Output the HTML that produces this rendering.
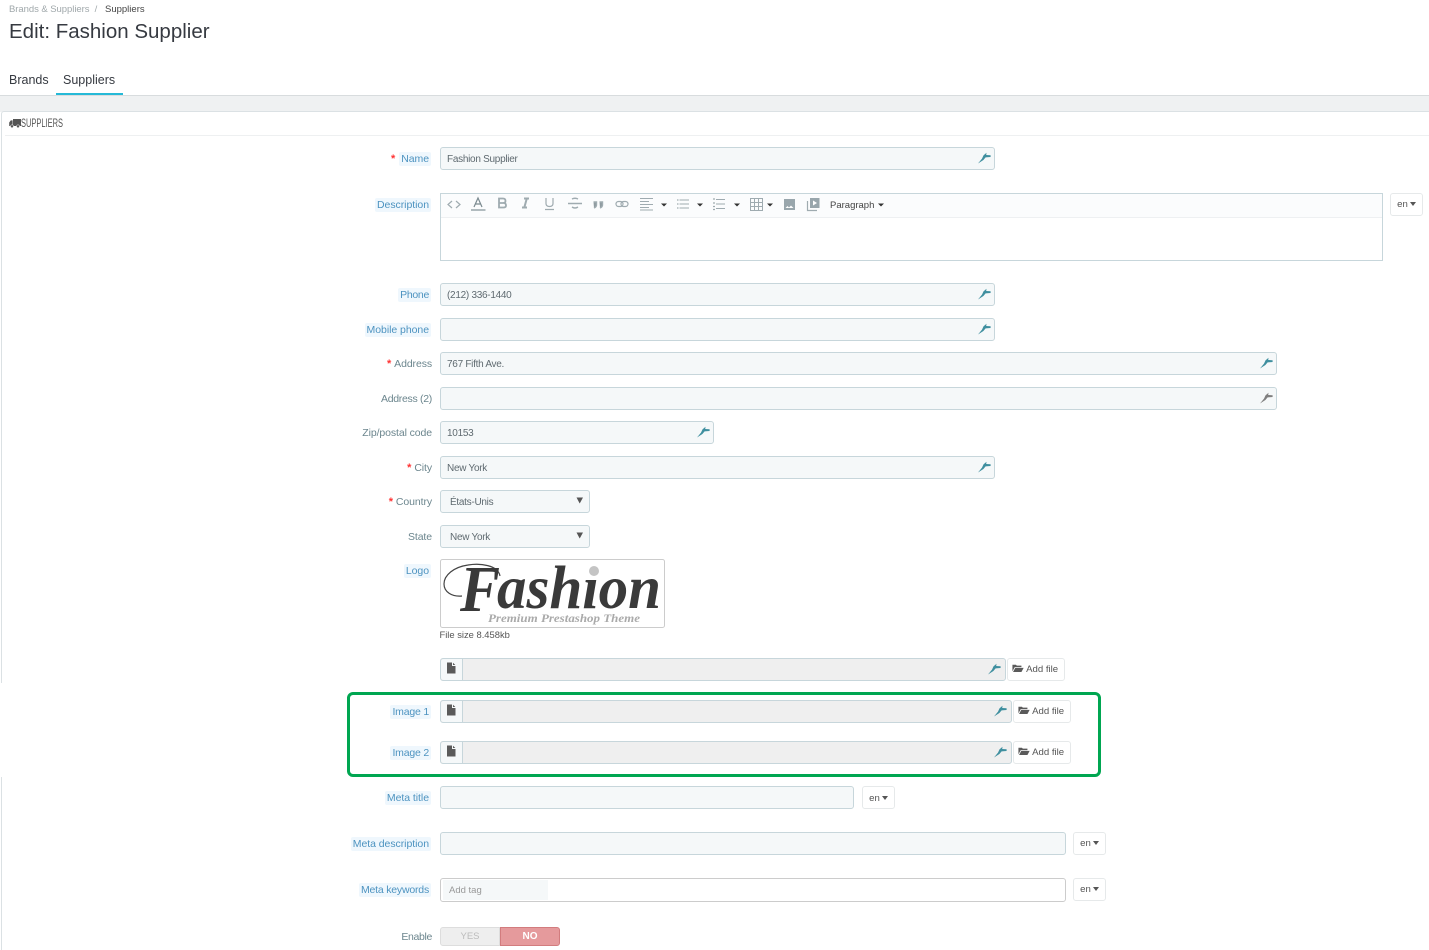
<!DOCTYPE html>
<html><head><meta charset="utf-8"><style>
html,body{margin:0;padding:0;width:1429px;height:950px;overflow:hidden;background:#fff}
body{font-family:"Liberation Sans",sans-serif;font-size:10.5px;color:#555;position:relative}
.a,.t,.i,.l,.b{position:absolute;box-sizing:border-box}
.t{white-space:nowrap;line-height:14px}
.i{height:23px;background:#f5f8f9;border:1px solid #c7d6db;border-radius:3px;padding:0 6px;line-height:23px;color:#5f6a70;white-space:nowrap;font-size:10px;letter-spacing:-.28px}
.i svg.w{position:absolute;right:3px;top:4px}
.l{right:997px;height:14px;line-height:14px;text-align:right;white-space:nowrap;color:#6c868e;letter-spacing:-.1px}
.h{right:998px;background:#eff7fd;color:#4d93c0;padding:0 2px;height:14px;border-radius:2px;letter-spacing:-.05px}
.r{color:#f33;font-size:12px;margin-right:3px;font-weight:bold}
.b{background:#fff;border:1px solid #e6e9ea;border-radius:3px;text-align:center;color:#555;height:23px;line-height:21px;white-space:nowrap;font-size:9.6px}
.c{display:inline-block;width:0;height:0;border:3px solid transparent;border-top:4px solid #555;border-bottom:0;vertical-align:1px;margin-left:2px}
.f{background:#efefef;padding:0}
.f .s{position:absolute;left:0;top:0;bottom:0;width:21px;background:#f5f8f9;border-right:1px solid #c7d6db;border-radius:3px 0 0 3px}
.add{text-align:left;padding-left:4px;width:58px}
</style></head><body>
<svg width="0" height="0" style="position:absolute"><defs>
<symbol id="w" viewBox="0 0 14 12"><path d="M1 11.5 L5 6.6 L6.5 3.400 L9.500 .8 L9.200 3 L13.600 3.200 L13.600 5 L8.600 5.400 L6.400 8 Z" fill="#3f8f9f"/></symbol>
<symbol id="d" viewBox="0 0 10 12"><path d="M1 .5H6V4H9.5V11.5H1ZM7 .7 9.3 3H7Z" fill="#5a5a5a"/></symbol>
<symbol id="o" viewBox="0 0 14 10"><path d="M.5 9V1.2H4.6L5.6 2.3H11V4H3.2L.5 9ZM1.2 9.6 3.8 4.8H13.6L11 9.6Z" fill="#5a5a5a"/></symbol>
</defs></svg>

<div class="t" style="left:9px;top:2px;font-size:9.5px;line-height:15px;color:#a0a8ab;letter-spacing:-.05px">Brands &amp; Suppliers &nbsp;/</div>
<div class="t" style="left:105px;top:2px;font-size:9.5px;line-height:15px;color:#444">Suppliers</div>
<div class="t" style="left:9px;top:20px;font-size:20.5px;line-height:24px;color:#363a41;letter-spacing:0">Edit: Fashion Supplier</div>
<div class="t" style="left:9px;top:73px;font-size:12.5px;color:#363a41">Brands</div>
<div class="t" style="left:63px;top:73px;font-size:12.5px;color:#363a41">Suppliers</div>
<div class="a" style="left:56px;top:93px;width:67px;height:2px;background:#25b9d7"></div>
<div class="a" style="left:0;top:95px;width:1429px;height:17px;background:#eff1f2;border-top:1px solid #d8dcde"></div>
<div class="a" style="left:1px;top:111px;width:1428px;height:839px;background:#fff;border:1px solid #dbe1e4;border-width:1px 0 0 1px;border-radius:3px 0 0 0"></div>
<div class="a" style="left:5px;top:135px;width:1424px;height:1px;background:#eef0f1"></div>
<svg class="a" style="left:9px;top:118px" width="12" height="10" viewBox="0 0 12 10"><path d="M4 1H12V8H4ZM.2 8V4.5L1.8 2.4H3.6V8Z" fill="#555"/><circle cx="3" cy="8.3" r="1.5" fill="#555" stroke="#fff" stroke-width=".5"/><circle cx="9" cy="8.3" r="1.5" fill="#555" stroke="#fff" stroke-width=".5"/></svg>
<div class="t" style="left:21px;top:117px;font-size:11.5px;color:#555;transform-origin:left;transform:scaleX(.65)">SUPPLIERS</div>

<div class="l h" style="top:152px">Name</div>
<div class="t r" style="left:391px;top:152px;color:#f33;font-size:11px">*</div>
<div class="i" style="left:440px;top:147px;width:555px">Fashion Supplier<svg class="w"  width="14" height="12"><use href="#w"/></svg></div>

<div class="l h" style="top:198px">Description</div>
<div class="a" style="left:440px;top:193px;width:943px;height:68px;border:1px solid #c7d6db"></div>
<div class="a" style="left:441px;top:194px;width:941px;height:24px;background:#fbfcfd;border-bottom:1px solid #eef0f2"></div>
<svg class="a" style="left:441px;top:194px" width="460" height="23" viewBox="0 0 460 23" fill="none" stroke="#9fabb0" stroke-width="1.2">
<path d="M11 7 7 10.500 11 14M15 7 19 10.500 15 14"/>
<path d="M33 13 37 4 41 13M34.500 10H39.500" stroke="#7b8a90"/><path d="M30 16H44.500" stroke-width="1.600"/>
<path d="M58 4.500H62Q64.500 4.500 64.500 7 64.500 9 62 9H58ZM58 9H62.500Q65 9 65 11.500 65 13.500 62.500 13.500H58Z" stroke-width="1.800"/>
<path d="M83 4.500H88M81 13.500H86M85.800 4.500 83.300 13.500" stroke-width="2"/>
<path d="M105 4V9.500Q105 12.500 108.500 12.500 112 12.500 112 9.500V4M104 15.500H113"/>
<path d="M127 9.500H141M137 5Q134 3.500 131 5M131 13Q134 15 137 13" stroke-width="1.400"/>
<path d="M152.500 8H155.500V11Q155.500 13 153 14M158.500 8H161.500V11Q161.500 13 159 14" stroke-width="1.400" fill="#8f9ba0"/>
<rect x="175" y="7.500" width="7" height="5" rx="2.500"/><rect x="180" y="7.500" width="7" height="5" rx="2.500"/>
<path d="M199 4.500H212M199 7.500H208M199 10.500H212M199 13.500H208M199 16H212" stroke-width="1"/>
<path d="M238.500 6H248M238.500 10H248M238.500 14H248" stroke-width="1"/><path d="M236 6H237.500M236 10H237.500M236 14H237.500" stroke-width="1.200"/>
<path d="M275 5.500H284M275 10H284M275 14.500H284" stroke-width="1"/><path d="M272 5H274M272 9H274M272 12.500H274M272 15.500H274" stroke-width="1.200"/>
<path d="M309.500 4.500H321.500V16.500H309.500ZM313.500 4.500V16.500M317.500 4.500V16.500M309.500 8.500H321.500M309.500 12.500H321.500" stroke-width="1"/>
<rect x="343" y="5" width="11" height="11" fill="#99a6ac" stroke="none"/><path d="M344.500 14 346.500 12 348 13.500 350 11.500 352.500 14Z" fill="#fff" stroke="none"/>
<path d="M366.500 7V16.500H376" stroke-width="1.200"/><rect x="369" y="4" width="9.500" height="10" fill="#99a6ac" stroke="none"/><path d="M372 6.500V11.500L376 9Z" fill="#fff" stroke="none"/>
<g fill="#333" stroke="none"><path d="M220 9.500H226L223 12.500Z"/><path d="M256 9.500H262L259 12.500Z"/><path d="M293 9.500H299L296 12.500Z"/><path d="M326 9.500H332L329 12.500Z"/><path d="M437 9.500H443L440 12.500Z"/></g>
</svg>
<div class="t" style="left:830px;top:198px;font-size:9.5px;line-height:15px;color:#444">Paragraph</div>
<div class="b" style="left:1390px;top:193px;width:33px">en<span class="c"></span></div>

<div class="l h" style="top:288px;letter-spacing:-.3px">Phone</div>
<div class="i" style="left:440px;top:283px;width:555px">(212) 336-1440<svg class="w" width="14" height="12"><use href="#w"/></svg></div>
<div class="l h" style="top:323px">Mobile phone</div>
<div class="i" style="left:440px;top:318px;width:555px"><svg class="w" width="14" height="12"><use href="#w"/></svg></div>
<div class="l" style="top:357px"><span class="r" style="font-size:11px">*</span>Address</div>
<div class="i" style="left:440px;top:352px;width:837px">767 Fifth Ave.<svg class="w" width="14" height="12"><use href="#w"/></svg></div>
<div class="l" style="top:392px;letter-spacing:-.3px">Address (2)</div>
<div class="i" style="left:440px;top:387px;width:837px"><svg class="w" width="14" height="12" style="filter:grayscale(1)"><use href="#w"/></svg></div>
<div class="l" style="top:426px">Zip/postal code</div>
<div class="i" style="left:440px;top:421px;width:274px">10153<svg class="w" width="14" height="12"><use href="#w"/></svg></div>
<div class="l" style="top:461px"><span class="r" style="font-size:11px">*</span>City</div>
<div class="i" style="left:440px;top:456px;width:555px">New York<svg class="w" width="14" height="12"><use href="#w"/></svg></div>
<div class="l" style="top:495px"><span class="r" style="font-size:11px">*</span>Country</div>
<div class="i" style="left:440px;top:490px;width:150px;padding-left:9px;line-height:24px">États-Unis<svg class="a" style="left:135px;top:6px" width="8" height="7"><path d="M.5 .5H7L3.700 6.500Z" fill="#555"/></svg></div>
<div class="l" style="top:530px">State</div>
<div class="i" style="left:440px;top:525px;width:150px;padding-left:9px">New York<svg class="a" style="left:135px;top:6px" width="8" height="7"><path d="M.5 .5H7L3.700 6.500Z" fill="#555"/></svg></div>

<div class="l h" style="top:564px">Logo</div>
<svg class="a" style="left:440px;top:559px" width="225" height="69" viewBox="0 0 225 69">
<rect x=".5" y=".5" width="224" height="68" rx="2" fill="#fff" stroke="#ccc"/>
<path d="M60 17C58 6 40 4 28 6 14 8 4 16 4 25 4 33 12 38 22 37" fill="none" stroke="#444" stroke-width="1.200"/>
<text x="20" y="52" font-family="Liberation Serif,serif" font-style="italic" font-weight="bold" font-size="66" textLength="40" lengthAdjust="spacingAndGlyphs" fill="#3a3a3a">F</text>
<text x="57" y="49" font-family="Liberation Serif,serif" font-style="italic" font-weight="bold" font-size="61" textLength="164" lengthAdjust="spacingAndGlyphs" fill="#3a3a3a">ashion</text>
<circle cx="154" cy="12" r="6.500" fill="#fff"/><circle cx="154" cy="12" r="5" fill="#c4c4c4"/>
<text x="48" y="63" font-family="Liberation Serif,serif" font-style="italic" font-weight="bold" font-size="12" textLength="152" lengthAdjust="spacingAndGlyphs" fill="#aaa">Premium Prestashop Theme</text>
</svg>
<div class="t" style="left:439.500px;top:628px;font-size:9.400px;color:#555">File size 8.458kb</div>

<div class="i f" style="left:440px;top:658px;width:566px"><span class="s"></span><svg class="a" style="left:5px;top:3px" width="10" height="12"><use href="#d"/></svg><svg class="w" width="14" height="12" style="right:4px"><use href="#w"/></svg></div>
<div class="b add" style="left:1007px;top:658px"><svg width="12" height="10" style="vertical-align:-1px"><use href="#o"/></svg> Add file</div>

<div class="a" style="left:0;top:683px;width:3px;height:94px;background:#fff"></div>
<div class="a" style="left:347px;top:692px;width:754px;height:85px;border:3px solid #00a651;border-radius:6px"></div>

<div class="l h" style="top:705px;letter-spacing:-.2px">Image 1</div>
<div class="i f" style="left:440px;top:700px;width:572px"><span class="s"></span><svg class="a" style="left:5px;top:3px" width="10" height="12"><use href="#d"/></svg><svg class="w" width="14" height="12" style="right:4px"><use href="#w"/></svg></div>
<div class="b add" style="left:1013px;top:700px"><svg width="12" height="10" style="vertical-align:-1px"><use href="#o"/></svg> Add file</div>
<div class="l h" style="top:746px;letter-spacing:-.2px">Image 2</div>
<div class="i f" style="left:440px;top:741px;width:572px"><span class="s"></span><svg class="a" style="left:5px;top:3px" width="10" height="12"><use href="#d"/></svg><svg class="w" width="14" height="12" style="right:4px"><use href="#w"/></svg></div>
<div class="b add" style="left:1013px;top:741px"><svg width="12" height="10" style="vertical-align:-1px"><use href="#o"/></svg> Add file</div>

<div class="l h" style="top:791px">Meta title</div>
<div class="i" style="left:440px;top:786px;width:414px"></div>
<div class="b" style="left:862px;top:786px;width:33px;line-height:23px">en<span class="c"></span></div>
<div class="l h" style="top:837px">Meta description</div>
<div class="i" style="left:440px;top:832px;width:626px"></div>
<div class="b" style="left:1073px;top:832px;width:33px">en<span class="c"></span></div>
<div class="l h" style="top:883px;letter-spacing:-.2px">Meta keywords</div>
<div class="a" style="left:440px;top:878px;width:626px;height:24px;background:#fff;border:1px solid #ccc;border-radius:3px"></div>
<div class="a" style="left:443px;top:880px;width:105px;height:20px;background:#f5f8f9;color:#999;padding-left:6px;line-height:22px;font-size:9.500px">Add tag</div>
<div class="b" style="left:1073px;top:878px;width:33px">en<span class="c"></span></div>
<div class="l" style="top:930px;letter-spacing:-.35px">Enable</div>
<div class="a" style="left:440px;top:927px;width:60px;height:19px;background:#eee;border:1px solid #ddd;border-radius:3px 0 0 3px;text-align:center;line-height:18px;color:#bbb;font-size:9.500px">YES</div>
<div class="a" style="left:500px;top:927px;width:60px;height:19px;background:#e59a9c;border:1px solid #d27c7e;border-radius:0 3px 3px 0;text-align:center;line-height:18px;color:#fff;font-size:10px;font-weight:bold">NO</div>
</body></html>
